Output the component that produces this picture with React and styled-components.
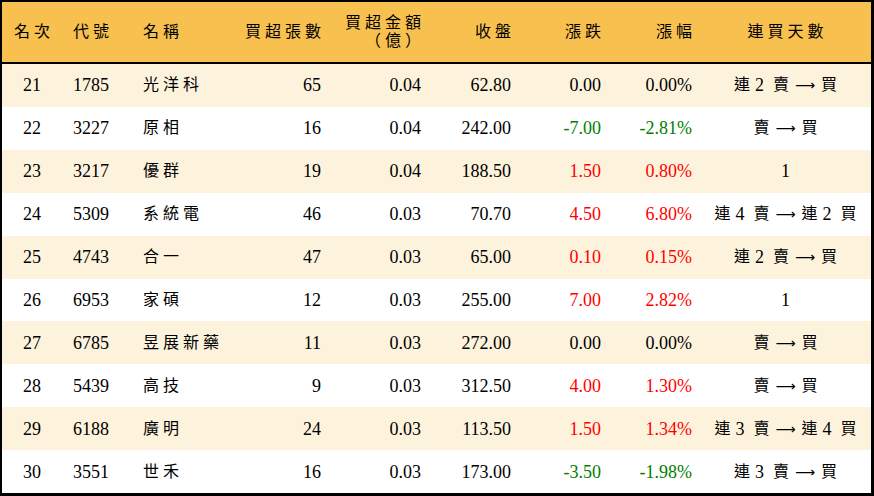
import React from "react"
import styled, { createGlobalStyle } from "styled-components"

const GlobalStyle = createGlobalStyle`
  html, body {
    margin: 0;
    padding: 0;
    background: #fff;
  }
`

const rows = [
  ["21", "1785", "光洋科", "65", "0.04", "62.80", "0.00", "0.00%", "連 2 賣 → 買"],
  ["22", "3227", "原相", "16", "0.04", "242.00", "-7.00", "-2.81%", "賣 → 買"],
  ["23", "3217", "優群", "19", "0.04", "188.50", "1.50", "0.80%", "1"],
  ["24", "5309", "系統電", "46", "0.03", "70.70", "4.50", "6.80%", "連 4 賣 → 連 2 買"],
  ["25", "4743", "合一", "47", "0.03", "65.00", "0.10", "0.15%", "連 2 賣 → 買"],
  ["26", "6953", "家碩", "12", "0.03", "255.00", "7.00", "2.82%", "1"],
  ["27", "6785", "昱展新藥", "11", "0.03", "272.00", "0.00", "0.00%", "賣 → 買"],
  ["28", "5439", "高技", "9", "0.03", "312.50", "4.00", "1.30%", "賣 → 買"],
  ["29", "6188", "廣明", "24", "0.03", "113.50", "1.50", "1.34%", "連 3 賣 → 連 4 買"],
  ["30", "3551", "世禾", "16", "0.03", "173.00", "-3.50", "-1.98%", "連 3 賣 → 買"],
]

const columns = "60px 73px 85px 110px 100px 90px 90px 90px 171px"

const Board = styled.div`
  width: 874px;
  height: 496px;
  box-sizing: border-box;
  border-style: solid;
  border-color: #000;
  border-width: 2px 3px 3px 2px;
  display: flex;
  flex-direction: column;
  font-family: "Liberation Serif", "Noto Sans CJK TC", serif;
  color: #000;
`

const HeadRow = styled.div`
  display: grid;
  grid-template-columns: ${columns};
  height: 62px;
  box-sizing: border-box;
  background: #f7c04f;
  border-bottom: 2px solid #000;
`

const Row = styled.div`
  display: grid;
  grid-template-columns: ${columns};
  flex: 1;
  background: ${(p) => (p.$shaded ? "#fdf3dc" : "#fff")};
`

const Cell = styled.div`
  display: flex;
  flex-direction: column;
  justify-content: center;
  align-items: ${(p) =>
    p.$align === "right" ? "flex-end" : p.$align === "left" ? "flex-start" : "center"};
  padding-left: ${(p) => p.$pl || 0}px;
  padding-right: ${(p) => p.$pr || 0}px;
  font-size: 18px;
  line-height: 18px;
  white-space: nowrap;
  color: ${(p) => p.$tone || "inherit"};
`

const HeadLabel = styled.span`
  font-size: 16px;
  line-height: 18px;
  letter-spacing: 4px;
  margin-right: -4px;
`

const CjkText = styled.span`
  font-size: 16px;
  letter-spacing: 4px;
`

const Streak = styled.span`
  display: inline-flex;
  align-items: center;
  gap: 6px;
  font-size: 16px;
`

const StreakNum = styled.span`
  font-size: 18px;
  margin: 0 3px 0 -1px;
`

const Arrow = styled.span`
  font-family: "DejaVu Sans", sans-serif;
  font-size: 14px;
  line-height: 18px;
`

const layout = [
  { align: "center" },
  { align: "left", pl: 11 },
  { align: "left", pl: 8 },
  { align: "right", pr: 9 },
  { align: "right", pr: 9 },
  { align: "right", pr: 9 },
  { align: "right", pr: 9 },
  { align: "right", pr: 8 },
  { align: "center" },
]

const heads = [["名次"], ["代號"], ["名稱"], ["買超張數"], ["買超金額", "（億）"], ["收盤"], ["漲跌"], ["漲幅"], ["連買天數"]]

const toneOf = (v) => {
  if (v.startsWith("-")) return "#008000"
  if (parseFloat(v) > 0) return "#ff0000"
  return undefined
}

const StreakText = ({ text }) => {
  if (text === "1") return <span>1</span>
  return (
    <Streak>
      {text.split(" ").map((part, i) =>
        /^[0-9]+$/.test(part) ? (
          <StreakNum key={i}>{part}</StreakNum>
        ) : part === "→" ? (
          <Arrow key={i}>⟶</Arrow>
        ) : (
          <span key={i}>{part}</span>
        )
      )}
    </Streak>
  )
}

const App = () => {
  return (
    <>
      <GlobalStyle />
      <Board>
        <HeadRow>
          {heads.map((lines, i) => (
            <Cell key={i} $align={layout[i].align} $pl={layout[i].pl} $pr={layout[i].pr}>
              {lines.map((l) => (
                <HeadLabel key={l}>{l}</HeadLabel>
              ))}
            </Cell>
          ))}
        </HeadRow>
        {rows.map((r, ri) => (
          <Row key={r[0]} $shaded={ri % 2 === 0}>
            {r.map((v, ci) => (
              <Cell
                key={ci}
                $align={layout[ci].align}
                $pl={layout[ci].pl}
                $pr={layout[ci].pr}
                $tone={ci === 6 || ci === 7 ? toneOf(v) : undefined}
              >
                {ci === 2 ? (
                  <CjkText>{v}</CjkText>
                ) : ci === 8 ? (
                  <StreakText text={v} />
                ) : (
                  v
                )}
              </Cell>
            ))}
          </Row>
        ))}
      </Board>
    </>
  )
}

export default App
